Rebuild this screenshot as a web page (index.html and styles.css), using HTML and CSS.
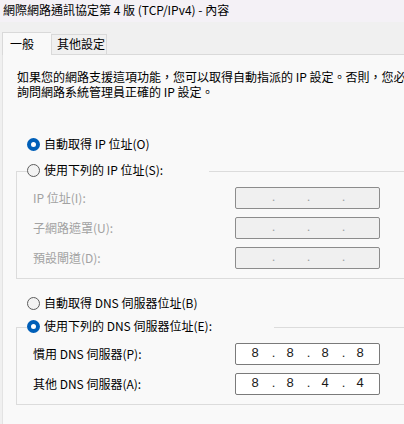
FILE: index.html
```html
<!DOCTYPE html>
<html lang="zh-Hant">
<head>
<meta charset="utf-8">
<title>網際網路通訊協定第 4 版 (TCP/IPv4) - 內容</title>
<link rel="stylesheet" href="styles.css">
</head>
<body>
<div class="window">
  <div class="titlebar">網際網路通訊協定第 4 版 (TCP/IPv4) - 內容</div>
  <div class="tabs">
    <div class="tab tab-active">一般</div>
    <div class="tab">其他設定</div>
  </div>
  <div class="panel">
    <p class="intro">如果您的網路支援這項功能，您可以取得自動指派的 IP 設定。否則，您必須<br>詢問網路系統管理員正確的 IP 設定。</p>

    <div class="radio-row row-first"><span class="radio on"></span>自動取得 IP 位址(O)</div>

    <div class="group">
      <div class="legend legend-ip"><span class="radio"></span>使用下列的 IP 位址(S):</div>
      <div class="field disabled">
        <span class="label">IP 位址(I):</span>
        <div class="ipbox"><span class="seg"></span><span class="dot">.</span><span class="seg"></span><span class="dot">.</span><span class="seg"></span><span class="dot">.</span><span class="seg"></span></div>
      </div>
      <div class="field disabled">
        <span class="label">子網路遮罩(U):</span>
        <div class="ipbox"><span class="seg"></span><span class="dot">.</span><span class="seg"></span><span class="dot">.</span><span class="seg"></span><span class="dot">.</span><span class="seg"></span></div>
      </div>
      <div class="field disabled">
        <span class="label">預設閘道(D):</span>
        <div class="ipbox"><span class="seg"></span><span class="dot">.</span><span class="seg"></span><span class="dot">.</span><span class="seg"></span><span class="dot">.</span><span class="seg"></span></div>
      </div>
    </div>

    <div class="radio-row row-dns"><span class="radio"></span>自動取得 DNS 伺服器位址(B)</div>

    <div class="group group-dns">
      <div class="legend legend-dns"><span class="radio on"></span>使用下列的 DNS 伺服器位址(E):</div>
      <div class="field">
        <span class="label">慣用 DNS 伺服器(P):</span>
        <div class="ipbox"><span class="seg">8</span><span class="dot">.</span><span class="seg">8</span><span class="dot">.</span><span class="seg">8</span><span class="dot">.</span><span class="seg">8</span></div>
      </div>
      <div class="field">
        <span class="label">其他 DNS 伺服器(A):</span>
        <div class="ipbox"><span class="seg">8</span><span class="dot">.</span><span class="seg">8</span><span class="dot">.</span><span class="seg">4</span><span class="dot">.</span><span class="seg">4</span></div>
      </div>
    </div>
  </div>
</div>
</body>
</html>
```
FILE: styles.css
```css
* { box-sizing: border-box; }

html, body {
  margin: 0;
  padding: 0;
  width: 404px;
  height: 424px;
  overflow: hidden;
  background: #f0f0f0;
}

body {
  font-family: "Noto Sans CJK TC", "Noto Sans", sans-serif;
  font-size: 12px;
  color: #000;
}

.window {
  width: 404px;
  height: 424px;
  display: flex;
  flex-direction: column;
}

.titlebar {
  height: 22px;
  line-height: 20px;
  padding-left: 3px;
  background: #f4f1f6;
  white-space: nowrap;
  overflow: hidden;
}

.tabs {
  height: 32px;
  display: flex;
  align-items: flex-end;
  padding-left: 2px;
  background: #f0f0f0;
}

.tab {
  height: 20px;
  line-height: 18px;
  margin-bottom: 0;
  padding-left: 5px;
  width: 56px;
  border: 1px solid #d9d9d9;
  border-bottom: none;
  background: #f0f0f0;
  white-space: nowrap;
}

.tab-active {
  position: relative;
  z-index: 1;
  height: 23px;
  line-height: 22px;
  width: 49px;
  padding-left: 7px;
  margin-bottom: -1px;
  background: #f9f9f9;
  border-right: none;
}

.panel {
  flex: 1;
  margin-left: 2px;
  background: #f9f9f9;
  border-top: 1px solid #dadada;
  border-left: 1px solid #e3e3e3;
  overflow: hidden;
}

.intro {
  margin: 0;
  padding: 14px 0 0 14px;
  line-height: 15px;
  white-space: nowrap;
}

.radio-row {
  display: flex;
  align-items: center;
  height: 16px;
  line-height: 16px;
  padding-left: 24px;
  white-space: nowrap;
}

.row-first { margin-top: 37px; }
.row-dns { margin-top: 16px; }

.radio {
  flex: none;
  width: 13px;
  height: 13px;
  border-radius: 50%;
  border: 1px solid #5d5d5d;
  background: #f3f3f3;
  margin-right: 4px;
}

.radio.on {
  border: 4px solid #005fb8;
  background: #ffffff;
}

.group {
  margin: 19px 0 0 13px;
  border: 1px solid #dcdcdc;
  border-right: none;
  padding: 0 0 9px 16px;
  display: flex;
  flex-direction: column;
  gap: 8px;
}

.group-dns { margin-top: 16px; }

.legend {
  display: flex;
  align-items: center;
  height: 16px;
  line-height: 16px;
  margin: -10px 0 1px -6px;
  background: #f9f9f9;
  white-space: nowrap;
}

.legend-ip { width: 182px; }
.legend-dns { width: 247px; }

.field {
  display: flex;
  align-items: center;
  height: 22px;
}

.label {
  width: 202px;
  line-height: 22px;
  white-space: nowrap;
}

.disabled .label { color: #a2a2a2; }

.ipbox {
  width: 145px;
  height: 22px;
  display: flex;
  padding-left: 7px;
  border: 1px solid #7a7a7a;
  border-radius: 2px;
  background: #ffffff;
  font-family: "Liberation Sans", Arial, sans-serif;
  font-size: 13px;
  line-height: 18px;
  color: #1a1a1a;
}

.disabled .ipbox {
  background: #f0f0f0;
  border-color: #8c8c8c;
  color: #a0a0a0;
}

.seg {
  width: 24px;
  text-align: center;
}

.dot {
  width: 11px;
  padding-left: 2px;
  text-align: center;
}
```
